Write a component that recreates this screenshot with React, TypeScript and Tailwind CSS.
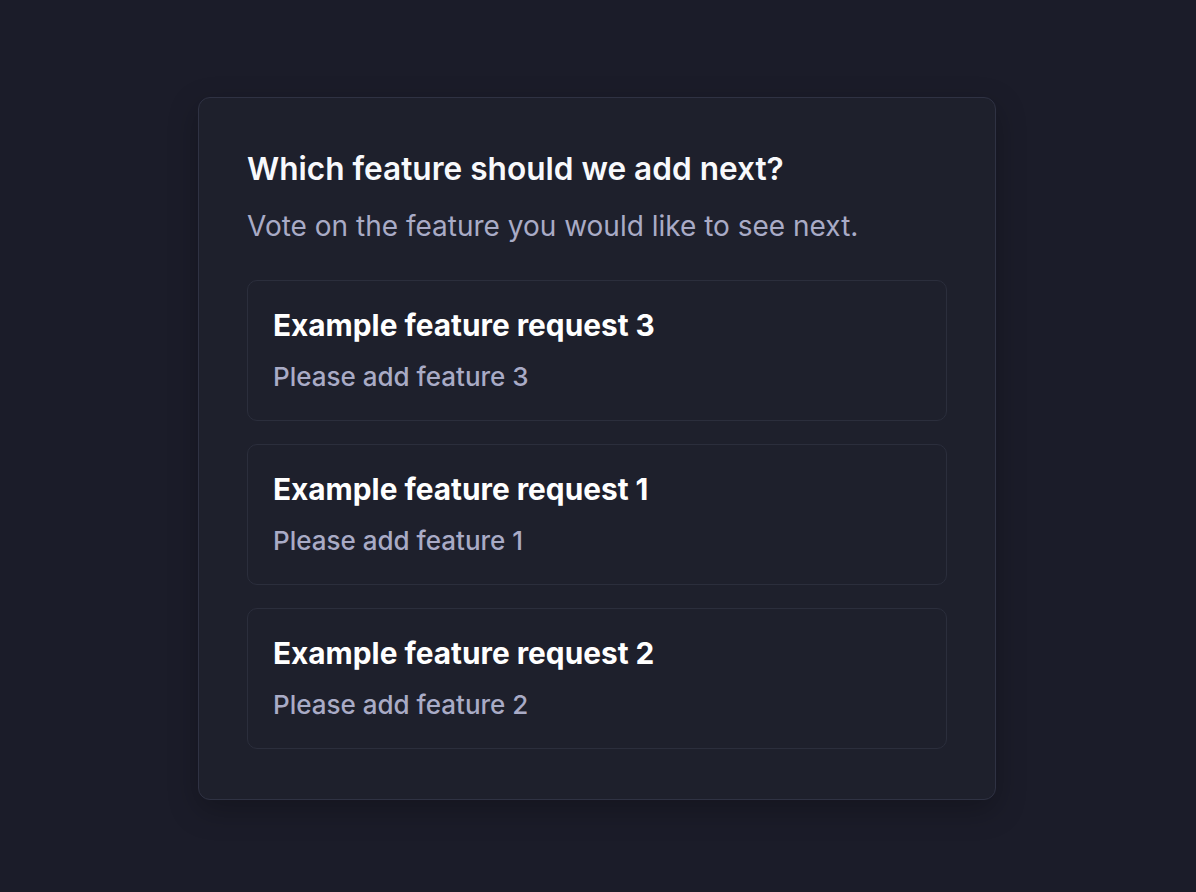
import React from 'react';

type Feature = {
  id: number;
  title: string;
  description: string;
};

const features: Feature[] = [
  { id: 3, title: 'Example feature request 3', description: 'Please add feature 3' },
  { id: 1, title: 'Example feature request 1', description: 'Please add feature 1' },
  { id: 2, title: 'Example feature request 2', description: 'Please add feature 2' },
];

export default function App() {
  return (
    <div className="min-h-screen w-full bg-[#1b1c29] flex justify-center pt-[97px] pr-[2px] font-['Inter',sans-serif]">
      <div className="w-[798px] h-[703px] rounded-[12px] border border-[#2f3243] bg-[#1e202c] px-[48px] pt-[51px] shadow-[0_10px_30px_rgba(0,0,0,0.25)]">
        <h1 className="text-[31.6px] leading-[40px] font-semibold text-[#f8f9fc]">
          Which feature should we add next?
        </h1>
        <p className="mt-[19px] text-[28px] leading-[36px] text-[#a9abc6]">
          Vote on the feature you would like to see next.
        </p>

        {/* Feature list */}
        <div className="mt-[36px] flex flex-col gap-[23px]">
          {features.map((feature) => (
            <div
              key={feature.id}
              className="h-[141px] rounded-[10px] border border-[#2b2e3c] bg-[#1e202c] px-[25px] pt-[27px]"
            >
              <h2 className="text-[29.8px] leading-[34px] font-bold text-white">{feature.title}</h2>
              <p className="mt-[19px] text-[26px] leading-[32px] font-medium text-[#a9abc6]">
                {feature.description}
              </p>
            </div>
          ))}
        </div>
      </div>
    </div>
  );
}
